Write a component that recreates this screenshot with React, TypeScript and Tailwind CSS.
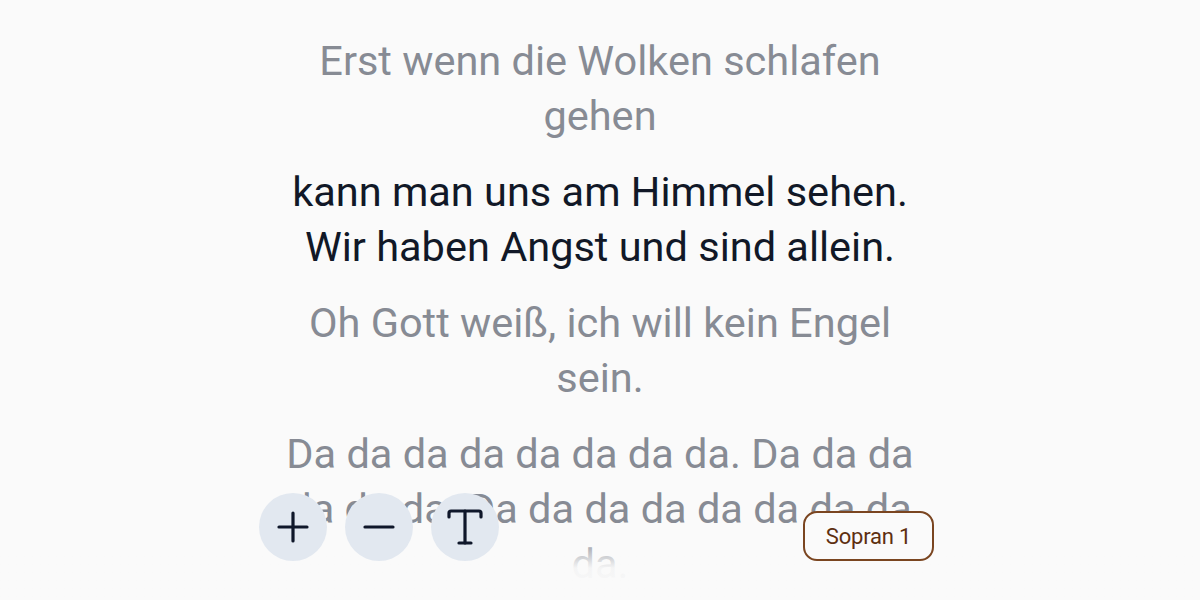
import React from "react";
import { Plus, Minus, Type } from "lucide-react";

// lines of each verse, broken where the reference wraps them
const verses = [
  { lines: ["Erst wenn die Wolken schlafen", "gehen"], active: false },
  { lines: ["kann man uns am Himmel sehen.", "Wir haben Angst und sind allein."], active: true },
  { lines: ["Oh Gott weiß, ich will kein Engel", "sein."], active: false },
  {
    lines: [
      "Da da da da da da da da. Da da da",
      "da da da. Da da da da da da da da",
      "da.",
    ],
    active: false,
  },
];

export default function App() {
  return (
    <div
      className="relative h-[600px] w-[1200px] overflow-hidden bg-[#fafafa]"
      style={{ fontFamily: "Roboto, 'Noto Sans', sans-serif" }}
    >
      {/* Lyrics */}
      <div className="mx-auto w-[640px] pt-[33px] text-center">
        {verses.map((v, i) => (
          <p
            key={i}
            className={`mb-[21px] whitespace-nowrap text-[41.5px] leading-[55px] ${
              v.active ? "text-[#111827]" : "text-[#878b94]"
            }`}
          >
            {v.lines.map((l, j) => (
              <span key={j} className="block">
                {l}
              </span>
            ))}
          </p>
        ))}
      </div>

      {/* Bottom fade */}
      <div className="absolute inset-x-0 bottom-0 h-[64px] bg-gradient-to-b from-[#fafafa]/0 via-[#fafafa]/95 to-[#fafafa]"></div>

      {/* Controls */}
      <div className="absolute inset-x-0 bottom-[39px]">
        <div className="mx-auto flex w-[682px] items-end justify-between pr-[7px]">
          <div className="flex gap-[18px]">
            <button className="flex h-[68px] w-[68px] items-center justify-center rounded-full bg-[#e2e8f0] text-[#0f172a]">
              <Plus size={48} strokeWidth={1.6} />
            </button>
            <button className="flex h-[68px] w-[68px] items-center justify-center rounded-full bg-[#e2e8f0] text-[#0f172a]">
              <Minus size={48} strokeWidth={1.6} />
            </button>
            <button className="flex h-[68px] w-[68px] items-center justify-center rounded-full bg-[#e2e8f0] text-[#0f172a]">
              <Type size={48} strokeWidth={1.6} />
            </button>
          </div>
          <div className="flex h-[50px] w-[131px] items-center justify-center rounded-[14px] border-2 border-[#7a4520] bg-[#fafafa] text-[22px] tracking-[-0.2px] text-[#5e2f10]">
            Sopran 1
          </div>
        </div>
      </div>
    </div>
  );
}
